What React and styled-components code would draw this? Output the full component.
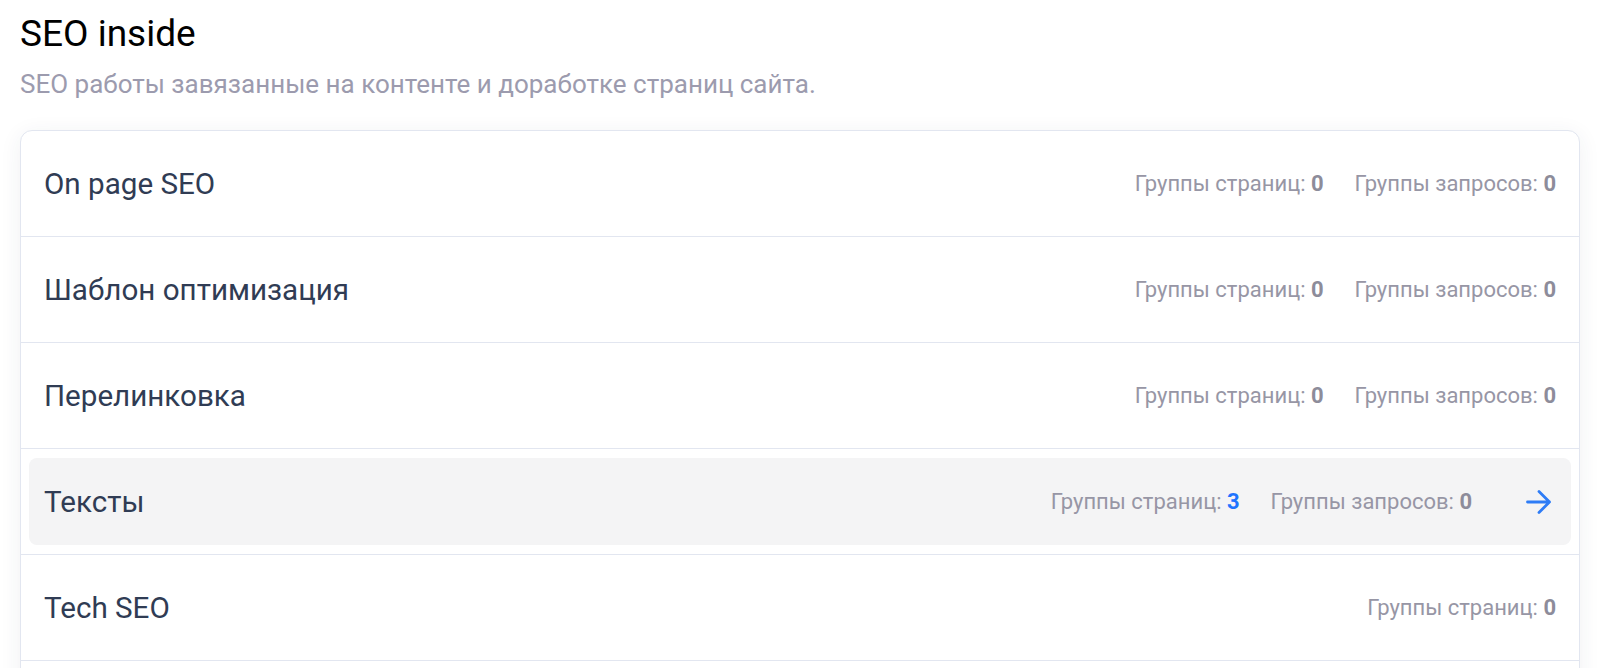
import styled, { createGlobalStyle } from "styled-components";

const GlobalStyle = createGlobalStyle`
  html, body {
    margin: 0;
    padding: 0;
    background: #ffffff;
  }
  body {
    font-family: Roboto, "Liberation Sans", Arial, sans-serif;
    -webkit-font-smoothing: antialiased;
  }
`;

const Page = styled.div`
  padding: 12px 20px 40px;
`;

const Title = styled.h1`
  margin: 0;
  font-size: 37px;
  line-height: 44px;
  font-weight: 400;
  color: #000000;
`;

const Subtitle = styled.p`
  margin: 12px 0 30px;
  font-size: 26px;
  line-height: 32px;
  color: #9c9bae;
`;

const Card = styled.div`
  border: 1px solid #e2e6f0;
  border-radius: 12px;
  background: #ffffff;
  box-shadow: 0 4px 22px rgba(40, 50, 90, 0.07);
  overflow: hidden;
`;

const Row = styled.div`
  padding: 9px 8px;
  border-bottom: 1px solid #e2e6f0;
`;

const RowInner = styled.div`
  display: flex;
  align-items: center;
  height: 87px;
  padding: 0 15px;
  border-radius: 8px;
  background: ${({ $active }) => ($active ? "#f4f4f5" : "transparent")};
  cursor: pointer;
`;

const Label = styled.div`
  flex: 1;
  font-size: 29.6px;
  color: #303c54;
`;

const Stats = styled.div`
  display: flex;
  align-items: center;
  gap: 31px;
`;

const Stat = styled.span`
  font-size: 22px;
  color: #9796a5;
  white-space: nowrap;
`;

const Count = styled.b`
  font-weight: 700;
  color: ${({ $highlight }) => ($highlight ? "#1f75fe" : "#8d8c9a")};
`;

const ArrowBox = styled.div`
  display: flex;
  align-items: center;
  width: 30px;
  padding-right: 4px;
  box-sizing: border-box;
  margin-left: 54px;
  color: #2e7cf6;
`;

const ArrowIcon = () => (
  <svg width="26" height="26" viewBox="0 0 26 26" fill="none">
    <path
      d="M1.5 13h22M13 2.5l10.5 10.5L13 23.5"
      stroke="currentColor"
      strokeWidth="2.8"
      strokeLinecap="round"
      strokeLinejoin="round"
    />
  </svg>
);

const items = [
  { title: "On page SEO", pages: 0, queries: 0 },
  { title: "Шаблон оптимизация", pages: 0, queries: 0 },
  { title: "Перелинковка", pages: 0, queries: 0 },
  { title: "Тексты", pages: 3, queries: 0, active: true },
  { title: "Tech SEO", pages: 0 },
  { title: "Ссылки", pages: 0 },
];

const App = () => (
  <>
    <GlobalStyle />
    <Page>
      <Title>SEO inside</Title>
      <Subtitle>SEO работы завязанные на контенте и доработке страниц сайта.</Subtitle>
      <Card>
        {items.map((item) => (
          <Row key={item.title}>
            <RowInner $active={item.active}>
              <Label>{item.title}</Label>
              <Stats>
                <Stat>
                  Группы страниц: <Count $highlight={item.pages > 0}>{item.pages}</Count>
                </Stat>
                {item.queries !== undefined && (
                  <Stat>
                    Группы запросов: <Count>{item.queries}</Count>
                  </Stat>
                )}
              </Stats>
              {item.active && (
                <ArrowBox>
                  <ArrowIcon />
                </ArrowBox>
              )}
            </RowInner>
          </Row>
        ))}
      </Card>
    </Page>
  </>
);

export default App;
